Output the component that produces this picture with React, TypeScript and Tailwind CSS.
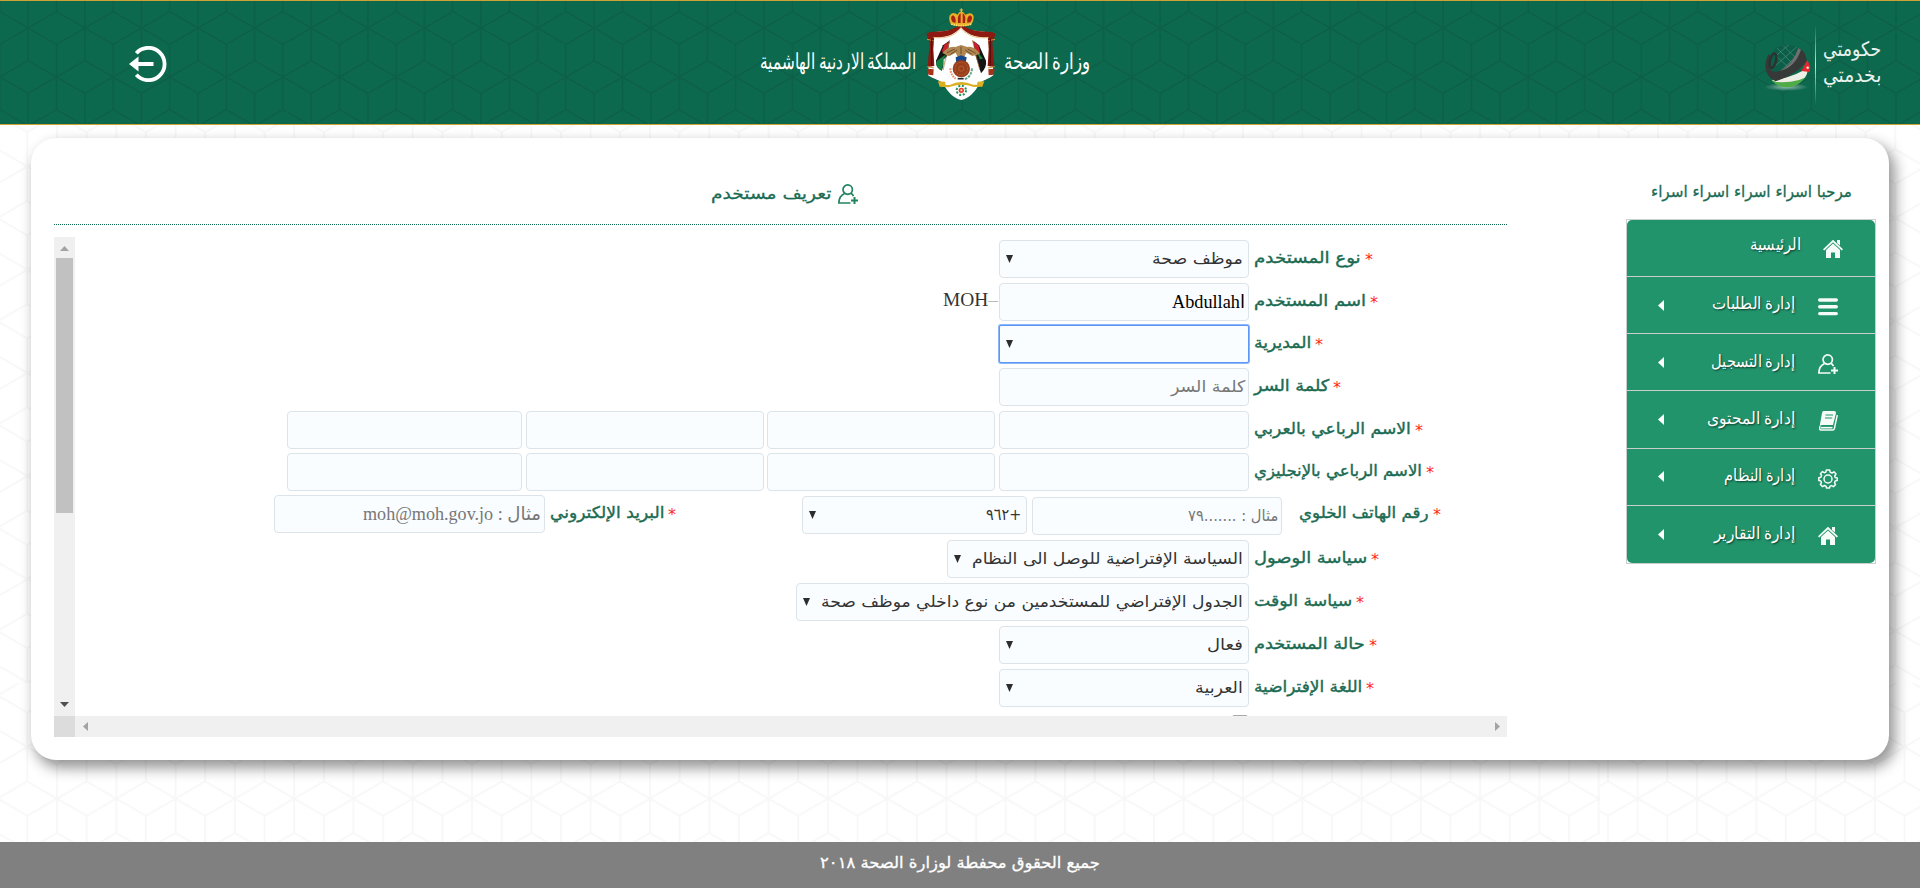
import React, { useLayoutEffect, useRef, useState } from "react";

/** Single line of right-to-left text squeezed or stretched to a given width. */
function Fit({ w, children, className = "" }: { w: number; children: React.ReactNode; className?: string }) {
  const ref = useRef<HTMLSpanElement>(null);
  const [scale, setScale] = useState(1);
  useLayoutEffect(() => {
    const natural = ref.current?.offsetWidth ?? 0;
    if (natural > 0) setScale(w / natural);
  }, [w]);
  return (
    <span dir="rtl" className="inline-flex shrink-0 justify-start" style={{ width: w }}>
      <span
        ref={ref}
        className={`inline-block shrink-0 origin-right whitespace-nowrap ${className}`}
        style={{ transform: `scaleX(${scale})` }}
      >
        {children}
      </span>
    </span>
  );
}

function CubePattern({ id, w, h, x, y, color, opacity }: { id: string; w: number; h: number; x: number; y: number; color: string; opacity: number }) {
  const a = w / 2;
  const q = h / 6;
  return (
    <pattern id={id} width={w} height={h} x={x} y={y} patternUnits="userSpaceOnUse">
      <path
        d={`M0 0L${a} ${q}L${w} 0M0 0V${2 * q}L${a} ${3 * q}L${w} ${2 * q}V0M${a} ${q}V${3 * q}M0 ${h}L${a} ${5 * q}L${w} ${h}M0 ${h}V${4 * q}L${a} ${3 * q}L${w} ${4 * q}V${h}M${a} ${3 * q}V${5 * q}`}
        fill="none"
        stroke={color}
        strokeOpacity={opacity}
        strokeWidth="1.6"
      />
    </pattern>
  );
}

function PageBackdrop() {
  return (
    <svg className="absolute inset-0 h-full w-full" viewBox="0 0 1920 888" aria-hidden="true">
      <defs>
        <CubePattern id="bodyTop" w={59.3} h={103.2} x={27.3} y={166.5} color="#000" opacity={0.032} />
        <CubePattern id="bodyLow" w={59.3} h={103.2} x={27.3} y={747} color="#000" opacity={0.032} />
        <CubePattern id="bodyRight" w={59.3} h={103.2} x={1904.5} y={747} color="#000" opacity={0.032} />
        <CubePattern id="head" w={56.6} h={98} x={28.2} y={28} color="#0a4434" opacity={0.24} />
      </defs>
      <rect width="1920" height="125" fill="#0d694e" />
      <rect width="1920" height="125" fill="url(#head)" />
      <rect y="125" width="1920" height="558" fill="url(#bodyTop)" />
      <rect y="683" width="1600" height="160" fill="url(#bodyLow)" />
      <rect x="1600" y="683" width="320" height="160" fill="url(#bodyRight)" />
    </svg>
  );
}

function Crest() {
  return (
    <svg className="h-[93px] w-[70px]" viewBox="77 26 210 279" aria-hidden="true">
      {/* mantle */}
      <path d="M84 106C100 96 130 96 160 92L182 80L204 92C234 96 264 96 280 106L274 122L279 228C262 242 248 240 236 256C222 280 206 296 183 302C160 296 144 280 130 256C118 240 104 242 83 228L90 122Z" fill="#fff" />
      <path d="M98 112C130 118 162 108 182 84C202 108 236 118 266 112L284 103C270 94 236 100 210 90L182 76L154 90C128 100 94 94 80 103Z" fill="#8e1a12" />
      <path d="M78 104Q92 92 102 106L99 150L102 200L82 203L88 130Z" fill="#8b1a12" />
      <path d="M286 104Q272 92 262 106L265 150L262 200L282 203L276 130Z" fill="#8b1a12" />
      <path d="M81 208L100 210L99 228L84 226ZM283 208L264 210L265 228L280 226Z" fill="#a5331a" />
      <path d="M80 120L100 124M264 124L284 120M81 202L101 206M263 206L283 202" stroke="#c99b33" strokeWidth="3" />
      <path d="M94 118V200M270 118V200" stroke="#5c0d0a" strokeWidth="4" />
      <path d="M98 114C132 120 164 110 182 87C200 110 234 120 266 114" fill="none" stroke="#dca94a" strokeWidth="2" />
      {/* flags and wings */}
      <path d="M128 138L147 124L142 164L124 214Q106 204 107 184Z" fill="#151515" />
      <path d="M236 138L219 124L224 164L242 222Q260 204 257 184Z" fill="#151515" />
      <path d="M110 184L135 166L124 214Q106 204 107 190Z" fill="#178045" />
      <path d="M229 154L248 178L238 180Z" fill="#178045" />
      <path d="M133 134L149 127L136 162L124 156Z" fill="#c8202c" />
      <path d="M217 125L234 136L240 162L226 156Z" fill="#c8202c" />
      <path d="M130 180L143 170L128 218Z" fill="#eee" />
      <path d="M148 122L128 212M216 122L238 212" stroke="#a77b38" strokeWidth="2" />
      <path d="M126 161Q144 139 165 143L182 137L201 143Q222 139 239 164L216 170L198 160L189 178H175L166 160L146 171Z" fill="#b18852" />
      <path d="M140 160L163 149M150 165L170 152M226 162L202 149M214 165L195 152M182 142V164" stroke="#6f4f2b" strokeWidth="3" />
      <path d="M166 174L182 168L199 174L196 192H168Z" fill="#17478c" />
      <circle cx="183" cy="208" r="26" fill="#9a3f1b" />
      <circle cx="183" cy="208" r="19" fill="none" stroke="#b5602d" strokeWidth="3" strokeDasharray="5 3" />
      <circle cx="183" cy="208" r="8" fill="none" stroke="#b5602d" strokeWidth="3" />
      <path d="M150 207Q151 228 166 238" fill="none" stroke="#e88962" strokeWidth="6" strokeDasharray="5 3" />
      <path d="M215 207Q213 232 193 240" fill="none" stroke="#5ba886" strokeWidth="6" strokeDasharray="8 3" />
      <path d="M172 238H190" stroke="#22242d" strokeWidth="5" />
      {/* ribbon and star */}
      <path d="M113 246L134 247L136 257H148Q182 240 218 256H230L232 247L252 246L246 262L220 263Q183 249 144 264L118 262Z" fill="#dcae22" />
      <circle cx="183" cy="273" r="14" fill="none" stroke="#25925b" strokeWidth="6" strokeDasharray="6 5" />
      <circle cx="183" cy="273" r="8" fill="#e2402c" />
      <circle cx="183" cy="273" r="3" fill="#ffe9b0" />
      {/* crown */}
      <path d="M152 76Q140 52 153 43Q161 38 172 46Q174 38 183 36Q192 38 195 46Q208 38 216 44Q226 54 213 76Q183 86 152 76Z" fill="#e7ae29" />
      <path d="M157 69Q147 52 158 48Q167 52 166 70ZM210 69Q221 52 209 48Q199 52 201 70ZM173 71Q170 48 181 42V71ZM187 71V42Q198 48 194 71Z" fill="#a92015" />
      <path d="M153 74Q183 84 213 74" fill="none" stroke="#ffdf72" strokeWidth="5" strokeDasharray="4 3" />
      <path d="M183 27V38M178 32H188" stroke="#f0c24a" strokeWidth="3" />
    </svg>
  );
}

function GlobeLogo() {
  return (
    <svg className="h-12 w-[50px]" viewBox="0 0 150 144" aria-hidden="true">
      <defs>
        <radialGradient id="globeShadow">
          <stop offset="0" stopColor="#fff" stopOpacity=".55" />
          <stop offset="1" stopColor="#fff" stopOpacity="0" />
        </radialGradient>
        <clipPath id="globeClip">
          <circle cx="66" cy="66" r="64" />
        </clipPath>
      </defs>
      <ellipse cx="64" cy="129" rx="66" ry="12" fill="url(#globeShadow)" />
      <g clipPath="url(#globeClip)">
        <path d="M30 10L60 0L106 8L90 70L40 90L10 80Z" fill="#0d5e48" />
        <path d="M36 12L90 66M54 4L100 50M34 36L78 78M98 6L30 66M110 20L44 84M72 2L34 34" stroke="#5d9c88" strokeWidth="1.6" />
        <path d="M20 108Q84 106 134 82V140H30Z" fill="#4fab45" />
        <path d="M20 108Q96 100 136 62V88Q108 118 34 114Z" fill="#eeeee6" />
      </g>
      <path d="M100 12Q112 16 120 30L126 50Q96 92 32 112Q4 100 1 68Q2 42 12 30L20 38Q10 55 16 76Q24 88 46 80Q84 60 100 12Z" fill="#373938" />
      <path d="M100 12Q84 60 46 80Q90 70 108 17Z" fill="#6f7170" />
      <ellipse cx="24" cy="50" rx="9" ry="22" fill="none" stroke="#2c302e" strokeWidth="7" transform="rotate(14 24 50)" />
      <path d="M127 48L109 81L134 84L136 68Z" fill="#e5262c" />
      <circle cx="128" cy="71" r="3.5" fill="#fff" />
    </svg>
  );
}

function LogoutIcon() {
  return (
    <svg className="h-9 w-[38px]" viewBox="0 0 38 36" aria-label="logout">
      <path d="M7.3 7.2A16.2 16.2 0 1 1 7.3 28.8" fill="none" stroke="#fff" strokeWidth="3.8" />
      <path d="M0 18L9.5 10.5V16H24.5V20H9.5V25.5Z" fill="#fff" />
    </svg>
  );
}

type IconName = "home" | "list" | "user" | "book" | "gear";

function Icon({ name, color = "#f4fbf8" }: { name: IconName; color?: string }) {
  return (
    <svg className="h-5 w-5 shrink-0" viewBox="0 0 20 20" fill="none" stroke={color} aria-hidden="true">
      {name === "home" && (
        <>
          <path d="M3 11L10 4.5L17 11V19H12V13.5H8V19H3Z" fill={color} stroke="none" />
          <path d="M.6 10.8L10 2L19.4 10.8" strokeWidth="1.8" />
          <path d="M14 1H17V6.5L14 4Z" fill={color} stroke="none" />
        </>
      )}
      {name === "list" && <path d="M1.7 3H18.3M1.7 9.8H18.3M1.7 16.6H18.3" strokeWidth="3.4" strokeLinecap="round" />}
      {name === "user" && (
        <>
          <circle cx="9.7" cy="5.6" r="4.7" strokeWidth="1.7" />
          <path d="M6.5 9.5Q1 12 .9 19H12.5M12.8 9.3Q14.5 10.3 15.5 12.2" strokeWidth="1.7" />
          <path d="M16.5 13V20M13 16.5H20" strokeWidth="2" />
        </>
      )}
      {name === "book" && (
        <>
          <path d="M5.5 0H16Q18.3 0 18 2L15 14H4Q2 14 1.5 16L4 2Q4.3 0 5.5 0Z" fill={color} stroke="none" />
          <path d="M2 15.2Q1 18.8 3 19H14.8Q16 19 16.4 17.5L19.3 4" strokeWidth="1.5" />
          <path d="M3 16.7H14.5" strokeWidth="1.6" />
          <path d="M7.5 4H15M7 7H14.2" stroke="#22946b" strokeWidth="1.1" />
        </>
      )}
      {name === "gear" && (
        <>
          <path d="M8.3 1H11.7L12.2 3.3L14 4L16 2.8L18 5L16.7 7L17.2 8.5L19.2 9V11.6L17.2 12L16.5 13.6L17.5 15.6L15.4 17.7L13.5 16.6L12 17.2L11.5 19H8.5L8 17.2L6.4 16.5L4.5 17.6L2.4 15.5L3.5 13.6L2.8 12L.8 11.5V8.7L2.8 8.2L3.5 6.5L2.4 4.7L4.5 2.6L6.4 3.7L7.9 3.1Z" strokeWidth="1.5" strokeLinejoin="round" />
          <circle cx="10" cy="10" r="4" strokeWidth="1.5" />
        </>
      )}
    </svg>
  );
}

const menu: { label: string; icon: IconName; w: number }[] = [
  { label: "إدارة الطلبات", icon: "list", w: 84 },
  { label: "إدارة التسجيل", icon: "user", w: 85 },
  { label: "إدارة المحتوى", icon: "book", w: 89 },
  { label: "إدارة النظام", icon: "gear", w: 72 },
  { label: "إدارة التقارير", icon: "home", w: 82 },
];

function Sidebar() {
  return (
    <aside dir="rtl" className="w-[250px]">
      <div className="flex h-8 items-center pr-[24px]">
        <Fit w={201} className="text-[16px] text-[#1a6b53] [-webkit-text-stroke:0.3px_#1a6b53]">مرحبا اسراء اسراء اسراء اسراء</Fit>
      </div>
      <nav className="mt-[11px] border border-[#c8cfcc]">
        <ul className="overflow-hidden rounded-[5px] bg-[#22946b] text-[17px] text-white [text-shadow:1px_1px_2px_#0a3d2c]">
          <li className="flex h-[57px] items-center border-b border-[#c8cfcc] pr-8">
            <span className="mt-0.5 flex"><Icon name="home" /></span>
            <span className="mr-[22px] -mt-1.5 flex"><Fit w={51} className="font-serif">الرئيسية</Fit></span>
          </li>
          {menu.map((m) => (
            <li key={m.label} className="flex h-[57.2px] items-center border-b border-[#c8cfcc] pr-[37px] last:border-b-0">
              <span className="mt-1 flex"><Icon name={m.icon} /></span>
              <span className="mr-[22px] -mt-0.5 flex"><Fit w={m.w} className="font-serif">{m.label}</Fit></span>
              <svg className="mr-auto ml-[31px] h-[11px] w-[6px]" viewBox="0 0 6 11" aria-hidden="true"><path d="M6 0V11L0 5.5Z" fill="#fff" /></svg>
            </li>
          ))}
        </ul>
      </nav>
    </aside>
  );
}

const boxCls = "flex h-[38px] shrink-0 items-center rounded-[4px] border border-[#dce4e9] bg-[#f9fdff]";

function Select({ width, text, textWidth, focused = false }: { width: string; text?: string; textWidth?: number; focused?: boolean }) {
  return (
    <div className={`${boxCls} ${width} justify-between pr-[5px] pl-[6px] ${focused ? "rounded-[2px]! border-[#5b97f5]! ring-1 ring-[#8db6f8]" : ""}`}>
      {text && textWidth ? <Fit w={textWidth} className="text-[16px] text-[#333]">{text}</Fit> : <span />}
      <svg className="h-2 w-[7px] shrink-0" viewBox="0 0 7 8" aria-hidden="true"><path d="M0 0H7L3.5 8Z" fill="#2d2d2d" /></svg>
    </div>
  );
}

function Input({ width, children }: { width: string; children?: React.ReactNode }) {
  return <div className={`${boxCls} ${width} pr-[3px]`}>{children}</div>;
}

function Label({ text, w, wide = "w-[253px]" }: { text: string; w: number; wide?: string }) {
  return (
    <label className={`flex h-[35px] shrink-0 items-center justify-end gap-1 ${wide}`}>
      <span className="h-5 w-[8px] text-[16px] leading-6 text-[#ff2a1c]">*</span>
      <Fit w={w} className="text-[16px] text-[#1b6b52] [-webkit-text-stroke:0.4px_#1b6b52]">{text}</Fit>
    </label>
  );
}

function Row({ gap = "mt-[5px]", children }: { gap?: string; children: React.ReactNode }) {
  return <div className={`flex gap-[5px] ${gap}`}>{children}</div>;
}

function NameFields() {
  return (
    <div className="flex">
      <Input width="w-[250px]" />
      <span className="w-1" />
      <Input width="w-[228px]" />
      <span className="w-[3px]" />
      <Input width="w-[238px]" />
      <span className="w-1" />
      <Input width="w-[235px]" />
    </div>
  );
}

function UserForm() {
  return (
    <form dir="rtl" className="h-[479px] flex-1 overflow-hidden pt-[3px]">
      <Row gap="mt-0"><Label text="نوع المستخدم" w={107} /><Select width="w-[250px]" text="موظف صحة" textWidth={91} /></Row>
      <Row>
        <Label text="اسم المستخدم" w={112} />
        <Input width="w-[250px]">
          <Fit w={73} className="font-['Liberation_Serif','DejaVu_Sans',sans-serif] text-[18px] text-black"><bdi dir="ltr">Abdullahا</bdi></Fit>
        </Input>
        <span dir="ltr" className="-mr-[4px] flex h-[34px] items-center">
          <Fit w={55} className="font-['Liberation_Serif'] text-[18px] text-[#333]"><bdi dir="ltr">MOH<span className="text-[#bbb]">–</span></bdi></Fit>
        </span>
      </Row>
      <Row gap="mt-1"><Label text="المديرية" w={57} /><Select width="w-[250px]" focused /></Row>
      <Row><Label text="كلمة السر" w={75} /><Input width="w-[250px]"><Fit w={74} className="text-[16px] text-[#777]">كلمة السر</Fit></Input></Row>
      <Row><Label text="الاسم الرباعي بالعربي" w={157} /><NameFields /></Row>
      <Row gap="mt-1"><Label text="الاسم الرباعي بالإنجليزي" w={168} /><NameFields /></Row>
      <div className="mt-1 flex h-[40px]">
        <Label text="رقم الهاتف الخلوي" w={130} wide="w-[208px]" />
        <div className="mt-[2px] mr-[17px]"><Input width="w-[250px]"><Fit w={90} className="text-[16px] text-[#777]">مثال : .......٧٩</Fit></Input></div>
        <div className="mt-px mr-[5px]"><Select width="w-[225px]" text="+٩٦٢" textWidth={35} /></div>
        <div className="mr-[126px]"><Label text="البريد الإلكتروني" w={114} wide="w-[126px]" /></div>
        <div className="mr-[5px]">
          <Input width="w-[271px]">
            <Fit w={178} className="font-['Liberation_Serif','DejaVu_Sans',sans-serif] text-[18px] text-[#777]">مثال : moh@moh.gov.jo</Fit>
          </Input>
        </div>
      </div>
      <Row><Label text="سياسة الوصول" w={113} /><Select width="w-[302px]" text="السياسة الإفتراضية للوصل الى النظام" textWidth={271} /></Row>
      <Row><Label text="سياسة الوقت" w={98} /><Select width="w-[453px]" text="الجدول الإفتراضي للمستخدمين من نوع داخلي موظف صحة" textWidth={422} /></Row>
      <Row><Label text="حالة المستخدم" w={111} /><Select width="w-[250px]" text="فعال" textWidth={36} /></Row>
      <Row><Label text="اللغة الإفتراضية" w={108} /><Select width="w-[250px]" text="العربية" textWidth={48} /></Row>
      <div className="mt-2 mr-[259px] h-4 w-4 rounded-[2px] border border-[#aaa] bg-white" />
    </form>
  );
}

function ScrollPane() {
  return (
    <div className="h-[500px] w-[1453px]">
      <div className="flex h-[479px]">
        <div className="flex w-[21px] shrink-0 flex-col items-center bg-[#f0f0f0]">
          <svg className="mt-[9px] h-[5px] w-[9px]" viewBox="0 0 9 5" aria-hidden="true"><path d="M0 5H9L4.5 0Z" fill="#a3a3a3" /></svg>
          <div className="mt-[7px] h-[255px] w-[17px] bg-[#c1c1c1]" />
          <svg className="mt-auto mb-[9px] h-[5px] w-[9px]" viewBox="0 0 9 5" aria-hidden="true"><path d="M0 0H9L4.5 5Z" fill="#505050" /></svg>
        </div>
        <UserForm />
      </div>
      <div className="flex h-[21px]">
        <div className="w-[21px] bg-[#dcdcdc]" />
        <div className="flex flex-1 items-center justify-between bg-[#f0f0f0] pr-[7px] pl-2">
          <svg className="h-[9px] w-[5px]" viewBox="0 0 5 9" aria-hidden="true"><path d="M5 0V9L0 4.5Z" fill="#a3a3a3" /></svg>
          <svg className="h-[9px] w-[5px]" viewBox="0 0 5 9" aria-hidden="true"><path d="M0 0V9L5 4.5Z" fill="#a3a3a3" /></svg>
        </div>
      </div>
    </div>
  );
}

export default function App() {
  return (
    <div className="relative flex h-[888px] w-[1920px] flex-col overflow-hidden bg-white font-['DejaVu_Sans',sans-serif]">
      <PageBackdrop />
      <header className="relative grid h-[125px] grid-cols-[760px_331px_1fr] border-y border-[#cfa236]">
        <div className="pt-[45px] pl-[129px]"><LogoutIcon /></div>
        <div className="flex pt-[7px] text-[22px] text-white">
          <div className="flex h-[108px] w-[166px] items-center"><Fit w={156} className="font-serif">المملكة الاردنية الهاشمية</Fit></div>
          <Crest />
          <div className="ml-2 flex h-[108px] items-center"><Fit w={87} className="font-serif">وزارة الصحة</Fit></div>
        </div>
        <div className="flex justify-end pr-[39px]">
          <div className="mt-[43px]"><GlobeLogo /></div>
          <div className="mt-6 h-20 w-px bg-linear-to-b from-transparent via-white/80 to-transparent" />
          <div className="mt-[35px] ml-[7px] flex flex-col text-[20px] leading-[26px] text-[#e8f3ef]">
            <Fit w={58}>حكومتي</Fit>
            <Fit w={58}>بخدمتي</Fit>
          </div>
        </div>
      </header>

      <main className="relative mt-[13px] ml-[31px] flex h-[622px] w-[1858px] justify-between rounded-[25px] bg-white pr-[13px] pl-[23px] shadow-[5px_7px_14px_1px_rgba(0,0,0,0.42)]">
        <section>
          <div className="flex h-[87px] w-[1453px] items-start justify-end border-b border-dotted border-[#0d694e] pt-11">
            <h1 className="mr-[649px] flex items-start gap-[7px]">
              <span className="-mt-[2px] flex h-7 items-center"><Fit w={120} className="text-[16px] font-normal text-[#1a6b53] [-webkit-text-stroke:0.3px_#1a6b53]">تعريف مستخدم</Fit></span>
              <span className="mt-0.5 flex"><Icon name="user" color="#22845f" /></span>
            </h1>
          </div>
          <div className="mt-3"><ScrollPane /></div>
        </section>
        <div className="pt-[38px]"><Sidebar /></div>
      </main>

      <footer className="relative mt-auto flex h-[46px] justify-center bg-[#808080] pt-[9px]">
        <Fit w={280} className="text-[16px] text-white [-webkit-text-stroke:0.3px_#fff]">جميع الحقوق محفطة لوزارة الصحة ٢٠١٨</Fit>
      </footer>
    </div>
  );
}
